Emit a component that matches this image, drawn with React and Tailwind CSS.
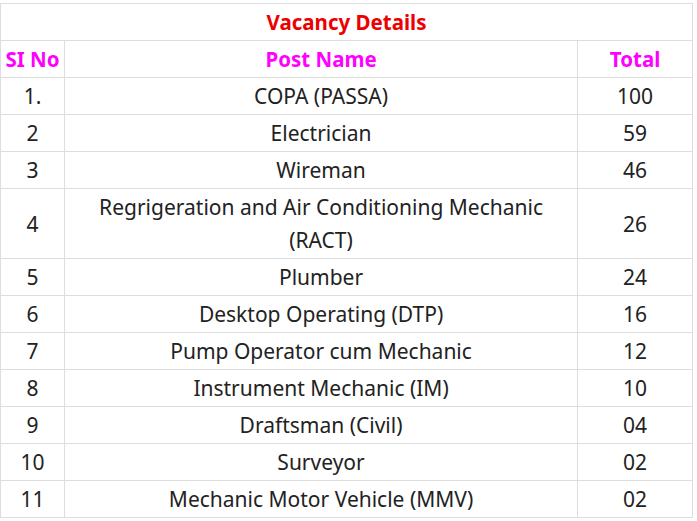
import React from "react";

const rows = [
  ["1.", "COPA (PASSA)", "100"],
  ["2", "Electrician", "59"],
  ["3", "Wireman", "46"],
  ["4", <>Regrigeration and Air Conditioning Mechanic<br />(RACT)</>, "26"],
  ["5", "Plumber", "24"],
  ["6", "Desktop Operating (DTP)", "16"],
  ["7", "Pump Operator cum Mechanic", "12"],
  ["8", "Instrument Mechanic (IM)", "10"],
  ["9", "Draftsman (Civil)", "04"],
  ["10", "Surveyor", "02"],
  ["11", "Mechanic Motor Vehicle (MMV)", "02"],
];

export default function App() {
  return (
    <div className="bg-white w-[697px] h-[521px] overflow-hidden pt-[3px]">
      <table
        className="w-[693px] border-collapse text-[21px] leading-[33px] text-[#222]"
        style={{ fontFamily: '"Noto Sans", "Open Sans", sans-serif' }}
      >
        <colgroup>
          <col className="w-[64px]" />
          <col className="w-[514px]" />
          <col className="w-[115px]" />
        </colgroup>
        <tbody>
          <tr>
            <td colSpan={3} className="border border-[#dddddd] px-[5px] pt-[2px] pb-[1px] text-center font-bold text-[20.5px] text-[#ee0000]">
              Vacancy Details
            </td>
          </tr>
          <tr>
            <td className="border border-[#dddddd] px-[2px] pt-[2px] pb-[1px] text-center font-bold text-[20.5px] text-[#ff00ff] whitespace-nowrap">SI No</td>
            <td className="border border-[#dddddd] px-[5px] pt-[2px] pb-[1px] text-center font-bold text-[20.5px] text-[#ff00ff]">Post Name</td>
            <td className="border border-[#dddddd] px-[5px] pt-[2px] pb-[1px] text-center font-bold text-[20.5px] text-[#ff00ff]">Total</td>
          </tr>
          {rows.map(([a, b, c]) => (
            <tr key={a}>
              <td className="border border-[#dddddd] px-[2px] pt-[2px] pb-[1px] text-center">{a}</td>
              <td className="border border-[#dddddd] px-[5px] pt-[2px] pb-[1px] text-center">{b}</td>
              <td className="border border-[#dddddd] px-[5px] pt-[2px] pb-[1px] text-center">{c}</td>
            </tr>
          ))}
        </tbody>
      </table>
    </div>
  );
}
